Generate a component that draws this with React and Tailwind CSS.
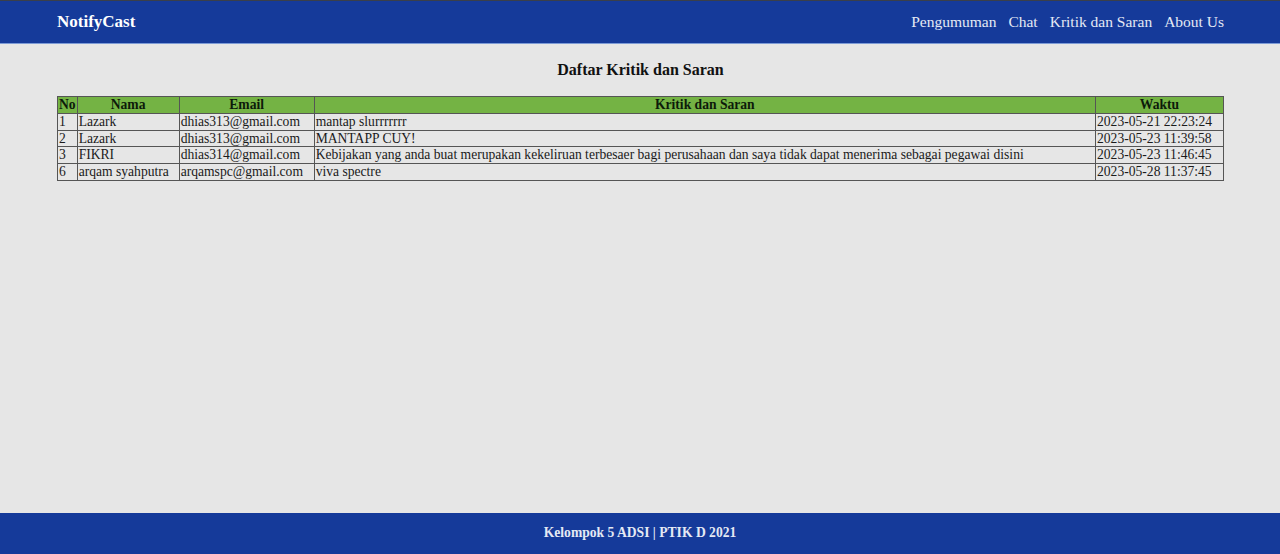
import React from 'react';

const rows = [
  { no: 1, nama: 'Lazark', email: 'dhias313@gmail.com', kritik: 'mantap slurrrrrrr', waktu: '2023-05-21 22:23:24' },
  { no: 2, nama: 'Lazark', email: 'dhias313@gmail.com', kritik: 'MANTAPP CUY!', waktu: '2023-05-23 11:39:58' },
  { no: 3, nama: 'FIKRI', email: 'dhias314@gmail.com', kritik: 'Kebijakan yang anda buat merupakan kekeliruan terbesaer bagi perusahaan dan saya tidak dapat menerima sebagai pegawai disini', waktu: '2023-05-23 11:46:45' },
  { no: 6, nama: 'arqam syahputra', email: 'arqamspc@gmail.com', kritik: 'viva spectre', waktu: '2023-05-28 11:37:45' },
];

const App = () => {
  return (
    <div className="flex flex-col h-[554px] bg-[#e6e6e6] text-[#1a1a1a] font-['Liberation_Serif','Times_New_Roman',serif]">
      {/* Navbar */}
      <header className="h-[44px] flex-shrink-0 bg-[#153a9a] border-t border-[#3a3f4a] border-b border-b-[#7d9bd6] flex items-center justify-between pl-[57px] pr-[56px]">
        <span className="text-[17px] font-bold text-white">NotifyCast</span>
        <nav className="flex items-center gap-[12px] text-[15.5px] text-[#e4e9f4]">
          <a>Pengumuman</a>
          <a>Chat</a>
          <a>Kritik dan Saran</a>
          <a>About Us</a>
        </nav>
      </header>

      {/* Content */}
      <main className="flex-1 pl-[57px] pr-[56px] pt-[17px]">
        <h2 className="text-center text-[16px] font-bold text-[#111] leading-[18px]">Daftar Kritik dan Saran</h2>
        <table className="mt-[17px] w-full border-collapse border border-[#555] text-[13.6px] leading-[15.8px]">
          <thead>
            <tr className="bg-[#74b344] text-[#0d1a0a]">
              <th className="border border-[#555] w-[18px] px-[1px] font-bold">No</th>
              <th className="border border-[#555] w-[102px] px-[1px] font-bold">Nama</th>
              <th className="border border-[#555] w-[135px] px-[1px] font-bold">Email</th>
              <th className="border border-[#555] px-[1px] font-bold">Kritik dan Saran</th>
              <th className="border border-[#555] w-[128px] px-[1px] font-bold">Waktu</th>
            </tr>
          </thead>
          <tbody>
            {rows.map(r => (
              <tr key={r.no}>
                <td className="border border-[#555] px-[1px]">{r.no}</td>
                <td className="border border-[#555] px-[1px] whitespace-nowrap">{r.nama}</td>
                <td className="border border-[#555] px-[1px] whitespace-nowrap">{r.email}</td>
                <td className="border border-[#555] px-[1px]">{r.kritik}</td>
                <td className="border border-[#555] px-[1px] whitespace-nowrap">{r.waktu}</td>
              </tr>
            ))}
          </tbody>
        </table>
      </main>

      {/* Footer */}
      <footer className="h-[41px] flex-shrink-0 bg-[#153a9a] flex items-center justify-center">
        <span className="text-[13.6px] font-bold text-[#e4e9f4]">Kelompok 5 ADSI | PTIK D 2021</span>
      </footer>
    </div>
  );
};

export default App;
